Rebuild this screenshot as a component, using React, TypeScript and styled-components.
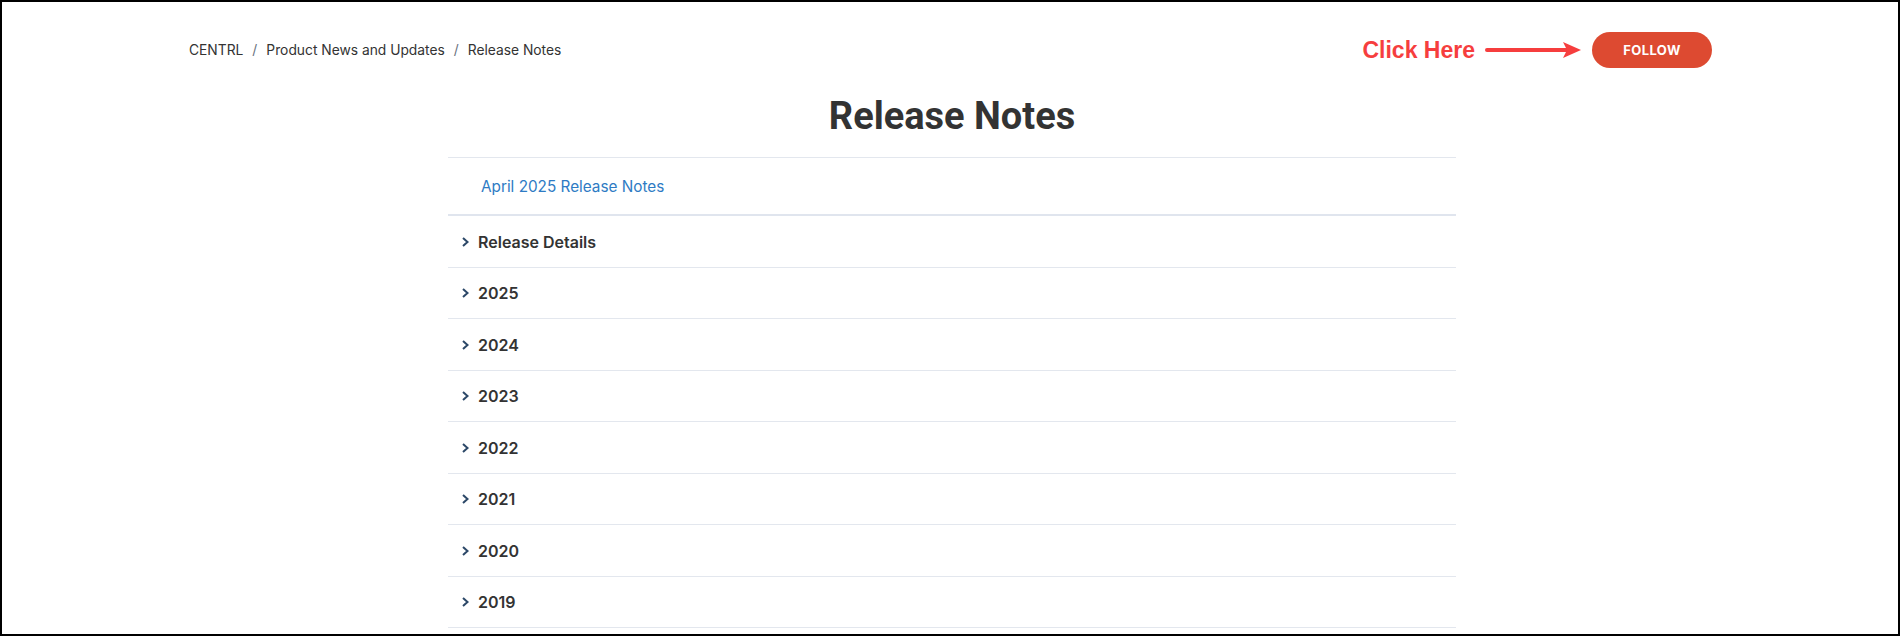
import React from "react";
import styled, { createGlobalStyle } from "styled-components";

const GlobalStyle = createGlobalStyle`
  html, body { margin: 0; padding: 0; background: #ffffff; }
  * { box-sizing: border-box; }
`;

const Frame = styled.div`
  width: 1900px;
  height: 636px;
  border: 2px solid #000;
  overflow: hidden;
  background: #fff;
  font-family: Inter, "Noto Sans", sans-serif;
  color: #333;
`;

const Header = styled.header`
  display: flex;
  align-items: center;
  justify-content: space-between;
  height: 38px;
  margin-top: 29px;
  padding: 0 186px 0 187px;
`;

const Breadcrumb = styled.nav`
  display: flex;
  align-items: center;
  font-size: 13.8px;
  color: #333;
`;

const Crumb = styled.span`
  color: #333;
`;

const Sep = styled.span`
  color: #6b7280;
  padding: 0 9px;
`;

const Actions = styled.div`
  display: flex;
  align-items: center;
`;

const Callout = styled.span`
  font-family: "Liberation Sans", Arial, sans-serif;
  font-weight: 700;
  font-size: 23px;
  color: #f63e3e;
  margin-right: 10px;
`;

const Arrow = styled.svg`
  display: block;
  margin-right: 11px;
`;

const FollowButton = styled.button`
  width: 120px;
  height: 36px;
  border: none;
  border-radius: 18px;
  background: #dd4a31;
  color: #fff;
  font-family: Inter, "Noto Sans", sans-serif;
  font-weight: 700;
  font-size: 13px;
  letter-spacing: 0.4px;
  cursor: pointer;
`;

const Title = styled.h1`
  margin: 24px 0 0;
  text-align: center;
  font-family: Roboto, "Noto Sans", sans-serif;
  font-weight: 700;
  font-size: 38px;
  line-height: 46px;
  color: #333;
  padding-left: 4px;
`;

const Column = styled.main`
  width: 1008px;
  margin: 18px auto 0;
  position: relative;
  left: 2px;
`;

const LinkRow = styled.div`
  display: flex;
  align-items: center;
  height: 59px;
  padding-left: 33px;
  border-top: 1px solid #e3e7ee;
  border-bottom: 2px solid #e0e5ee;
`;

const NoteLink = styled.a`
  font-size: 15.3px;
  color: #2e7bc4;
  text-decoration: none;
`;

const Row = styled.div`
  display: flex;
  align-items: center;
  height: 51.5px;
  padding-left: 13px;
  padding-top: 1px;
  border-bottom: 1px solid #e3e7ee;
`;

const Chevron = styled.svg`
  display: block;
  margin-right: 8px;
  flex: none;
`;

const RowLabel = styled.span`
  font-size: 16px;
  font-weight: 600;
  color: #333;
`;

const rows = ["Release Details", "2025", "2024", "2023", "2022", "2021", "2020", "2019"];

export default function App() {
  return (
    <>
      <GlobalStyle />
      <Frame>
        <Header>
          <Breadcrumb>
            <Crumb>CENTRL</Crumb>
            <Sep>/</Sep>
            <Crumb>Product News and Updates</Crumb>
            <Sep>/</Sep>
            <Crumb>Release Notes</Crumb>
          </Breadcrumb>
          <Actions>
            <Callout>Click Here</Callout>
            <Arrow width="96" height="20" viewBox="0 0 96 20">
              <line x1="2" y1="10" x2="84" y2="10" stroke="#f63e3e" strokeWidth="4" strokeLinecap="round" />
              <path d="M78 2 L96 10 L78 18 L82 10 Z" fill="#f63e3e" />
            </Arrow>
            <FollowButton>FOLLOW</FollowButton>
          </Actions>
        </Header>
        <Title>Release Notes</Title>
        <Column>
          <LinkRow>
            <NoteLink href="#">April 2025 Release Notes</NoteLink>
          </LinkRow>
          {rows.map((r) => (
            <Row key={r}>
              <Chevron width="9" height="12" viewBox="0 0 9 12">
                <path d="M2 2 L6.5 6 L2 10" fill="none" stroke="#2c4868" strokeWidth="2" />
              </Chevron>
              <RowLabel>{r}</RowLabel>
            </Row>
          ))}
        </Column>
      </Frame>
    </>
  );
}
